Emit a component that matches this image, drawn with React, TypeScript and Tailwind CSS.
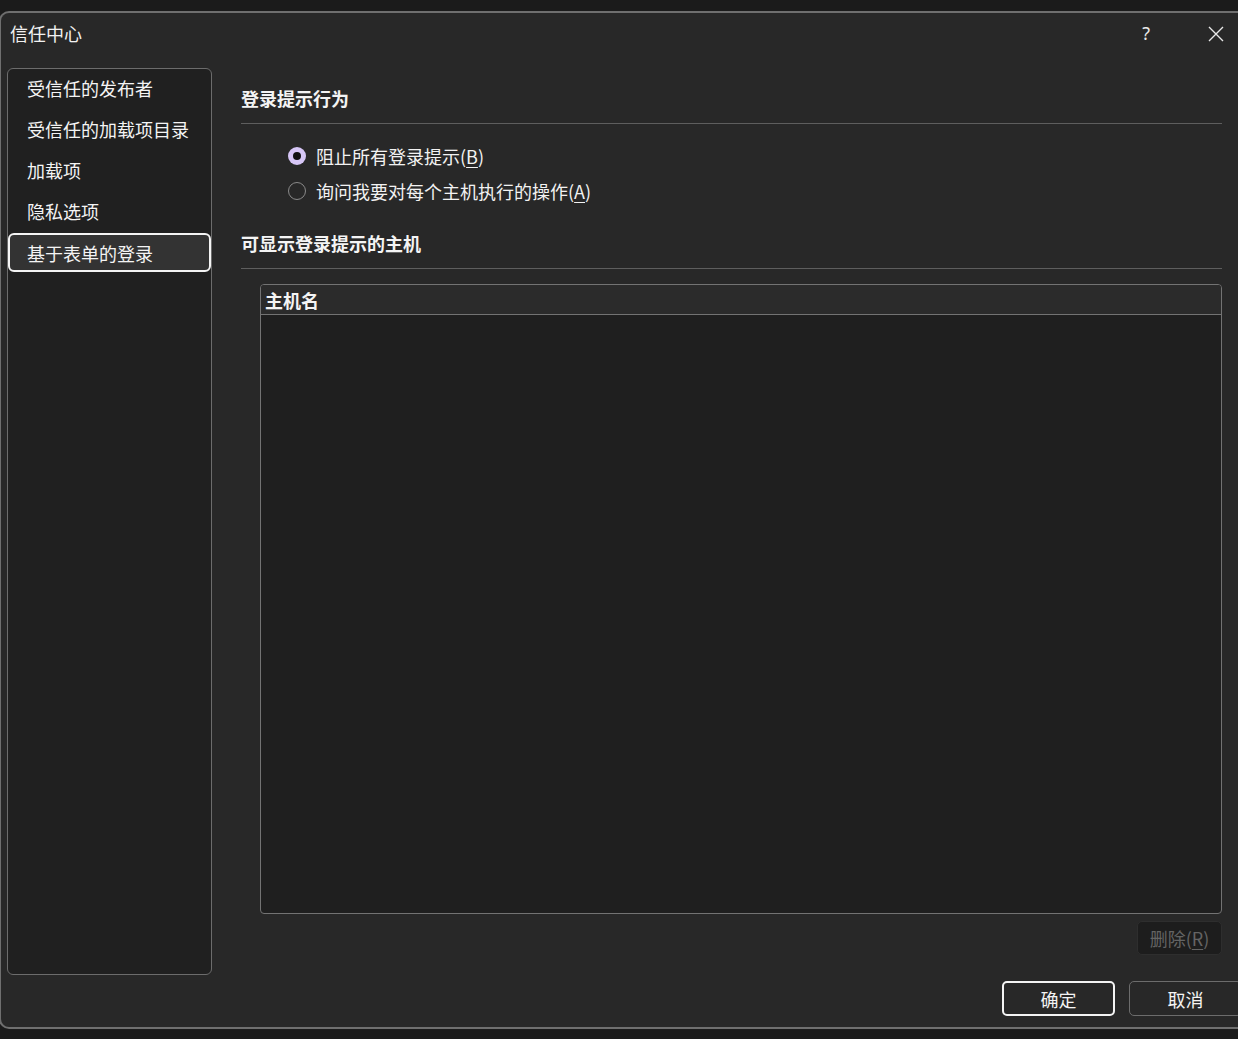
import React from "react";

const FONT = { fontFamily: '"Noto Sans CJK SC", "Noto Sans", sans-serif' };

function Radio({ checked, children }: { checked?: boolean; children: React.ReactNode }) {
  return (
    <div className="flex h-[35px] items-center">
      {checked ? (
        <span className="flex h-[18px] w-[18px] items-center justify-center rounded-full bg-[#d6c6f6]">
          <span className="h-[8px] w-[8px] rounded-full bg-[#111111]" />
        </span>
      ) : (
        <span className="h-[18px] w-[18px] rounded-full border-[1.5px] border-[#8a8a8a]" />
      )}
      <span className="ml-[10px] text-[18px] leading-[24px] text-[#f2f2f2]">{children}</span>
    </div>
  );
}

export default function App() {
  const items = ["受信任的发布者", "受信任的加载项目录", "加载项", "隐私选项", "基于表单的登录"];
  return (
    <div className="flex h-[1039px] w-[1238px] flex-col overflow-hidden bg-[#1b1b1b] pt-[11px]" style={FONT}>
      <div className="ml-[-1px] flex w-[1250px] flex-col rounded-tl-[10px] rounded-bl-[10px] border-t-2 border-b-2 border-l-2 border-[#6f6f6f] bg-[#282828] h-[1018px]">
        {/* title bar */}
        <div className="flex h-[43px] items-center pl-[9px] text-[18px] text-[#f2f2f2]">
          <span className="mb-[4px] leading-[24px]">信任中心</span>
          <span className="mb-[4px] ml-auto mr-[58px] text-[18px] leading-[24px] text-[#e8e8e8]" style={{ fontFamily: '"Noto Sans", sans-serif' }}>?</span>
          <svg width="16" height="16" viewBox="0 0 16 16" className="mb-[2px] mr-[25px]">
            <path d="M1 1 L15 15 M15 1 L1 15" stroke="#e8e8e8" strokeWidth="1.4" />
          </svg>
        </div>
        {/* body */}
        <div className="flex pt-[12px] pl-[6px]">
          <div className="flex h-[907px] w-[205px] flex-col rounded-[6px] border border-[#6c6c6c] bg-[#202020]">
            <div className="mt-[-2px] flex flex-col">
              {items.map((t, i) =>
                i === 4 ? (
                  <div key={t} className="mt-[2px] flex h-[39px] items-center rounded-[6px] border-2 border-[#f4f4f4] bg-[#333333] pl-[17px] text-[18px] leading-[24px] text-[#f4f4f4]">
                    {t}
                  </div>
                ) : (
                  <div key={t} className="flex h-[41px] items-center pl-[19px] text-[18px] leading-[24px] text-[#f4f4f4]">
                    {t}
                  </div>
                )
              )}
            </div>
          </div>
          <div className="ml-[29px] flex w-[981px] flex-col pt-[18px]">
            <div className="text-[18px] font-bold leading-[24px] text-[#f4f4f4]">登录提示行为</div>
            <div className="mt-[13px] h-px bg-[#5e5e5e]" />
            <div className="mt-[14px] pl-[47px]">
              <Radio checked>
                阻止所有登录提示(<u className="underline-offset-[3px]">B</u>)
              </Radio>
              <Radio>
                询问我要对每个主机执行的操作(<u className="underline-offset-[3px]">A</u>)
              </Radio>
            </div>
            <div className="mt-[23px] text-[18px] font-bold leading-[24px] text-[#f4f4f4]">可显示登录提示的主机</div>
            <div className="mt-[13px] h-px bg-[#5e5e5e]" />
            <div className="ml-[19px] mt-[15px] flex h-[630px] flex-col overflow-hidden rounded-[4px] border border-[#737373] bg-[#1f1f1f]">
              <div className="flex h-[30px] items-center border-b border-[#737373] bg-[#2b2b2b] pl-[4px] text-[18px] font-bold leading-[24px] text-[#f4f4f4]">
                主机名
              </div>
            </div>
            <div className="mt-[7px] flex justify-end">
              <div className="flex h-[34px] w-[85px] items-center justify-center rounded-[5px] border border-[#2e2e2e] bg-[#1d1d1d] text-[18px] leading-[24px] text-[#646464]">
                删除(<u className="underline-offset-[3px]">R</u>)
              </div>
            </div>
          </div>
        </div>
        {/* footer */}
        <div className="mt-[6px] flex pl-[1001px]">
          <div className="flex h-[35px] w-[113px] items-center justify-center rounded-[5px] border-2 border-[#f4f4f4] text-[18px] leading-[24px] text-[#f4f4f4]">
            确定
          </div>
          <div className="ml-[14px] flex h-[35px] w-[113px] items-center justify-center rounded-[5px] border border-[#6c6c6c] text-[18px] leading-[24px] text-[#f4f4f4]">
            取消
          </div>
        </div>
      </div>
    </div>
  );
}
